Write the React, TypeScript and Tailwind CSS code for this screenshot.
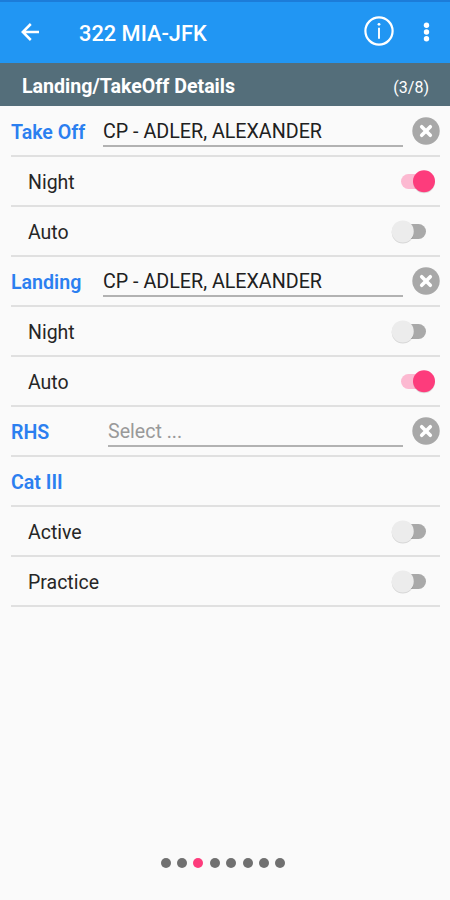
import type { ReactNode } from 'react';

const PAGE_COUNT = 8;
const CURRENT_PAGE = 3;

const ClearIcon = () => (
  <svg className="w-7 h-7 shrink-0" viewBox="0 0 28 28">
    <circle cx="14" cy="14" r="13.7" fill="#a8a8a8" />
    <path d="M9.7 9.7l8.6 8.6M18.3 9.7l-8.6 8.6" stroke="#fff" strokeWidth="3.6" strokeLinecap="round" />
  </svg>
);

const Toggle = ({ on = false }: { on?: boolean }) => (
  <svg className="w-12 h-7 shrink-0" viewBox="0 0 48 28">
    {on ? (
      <>
        <rect x="11" y="7" width="28" height="15" rx="7.5" fill="#fcb9d1" />
        <circle cx="34" cy="15.2" r="11" fill="#000" opacity="0.12" />
        <circle cx="34" cy="14.3" r="11" fill="#fd3c7c" />
      </>
    ) : (
      <>
        <rect x="8" y="7" width="28" height="15" rx="7.5" fill="#a9a9a9" />
        <circle cx="12.8" cy="15.3" r="11.1" fill="#000" opacity="0.14" />
        <circle cx="12.8" cy="14.4" r="11" fill="#ececec" />
      </>
    )}
  </svg>
);

const Row = ({ children }: { children: ReactNode }) => (
  <div className="flex items-center h-[50px] border-b-2 border-[#e0e0e0]">{children}</div>
);

const SectionLabel = ({ children }: { children: ReactNode }) => (
  <span className="block pt-[4px] text-[19.6px] leading-6 font-semibold text-[#2b7ff0]">{children}</span>
);

const PickerRow = ({ label, value }: { label: string; value?: string }) => (
  <Row>
    <div className={value ? 'w-[92px] shrink-0' : 'w-[97px] shrink-0'}>
      <SectionLabel>{label}</SectionLabel>
    </div>
    <div className="flex-1 h-[30px] mt-[2px] border-b-2 border-[#b2b2b2]">
      <div
        className={
          value
            ? 'text-[19.7px] leading-[29px] text-[#202020] whitespace-nowrap'
            : 'text-[19.6px] leading-[29px] text-[#999]'
        }
      >
        {value || 'Select ...'}
      </div>
    </div>
    <div className="ml-[9px]">
      <ClearIcon />
    </div>
  </Row>
);

const ToggleRow = ({ label, on }: { label: string; on?: boolean }) => (
  <Row>
    <span className="flex-1 pl-[17px] pt-[3px] text-[19.5px] leading-6 text-[#262626]">{label}</span>
    <Toggle on={on} />
    <div className="w-[2px]" />
  </Row>
);

const App = () => {
  return (
    <div className="flex flex-col w-[450px] h-[900px] overflow-hidden bg-[#fafafa] font-['Roboto',sans-serif]">
      <div className="h-[2px] bg-[#1c7cd9]" />
      <header className="flex items-center h-[61px] bg-[#2196f3] text-white">
        <svg className="ml-5 -mt-px w-5 h-5" viewBox="0 0 20 20" fill="none" stroke="#fff" strokeWidth="2.5">
          <path d="M19 10H3M10.8 2L2.8 10l8 8" />
        </svg>
        <h1 className="flex-1 ml-[39px] pt-[2px] text-[21.8px] leading-7 font-medium whitespace-nowrap">
          322 MIA-JFK
        </h1>
        <svg className="w-[30px] h-[30px] -mt-[3px]" viewBox="0 0 30 30" fill="none" stroke="#fff">
          <circle cx="15" cy="15" r="13.6" strokeWidth="2.2" />
          <path d="M15 11.7v11" strokeWidth="1.9" />
          <circle cx="15" cy="8.3" r="1.4" fill="#fff" stroke="none" />
        </svg>
        <svg className="ml-[29px] mr-[20px] -mt-px w-[7px] h-5" viewBox="0 0 7 20" fill="#fff">
          <circle cx="3.5" cy="3.2" r="2.7" />
          <circle cx="3.5" cy="10" r="2.7" />
          <circle cx="3.5" cy="16.8" r="2.7" />
        </svg>
      </header>
      <div className="flex items-center justify-between h-[43px] pl-[22px] pr-[21px] bg-[#546e7a] text-white">
        <h2 className="pt-[4px] text-[19.6px] leading-6 font-bold">Landing/TakeOff Details</h2>
        <span className="pt-[6px] text-[16px] leading-5">(3/8)</span>
      </div>

      <main className="flex-1 pt-[1px] pl-[11px] pr-[10px]">
        <PickerRow label="Take Off" value="CP - ADLER, ALEXANDER" />
        <ToggleRow label="Night" on />
        <ToggleRow label="Auto" />
        <PickerRow label="Landing" value="CP - ADLER, ALEXANDER" />
        <ToggleRow label="Night" />
        <ToggleRow label="Auto" on />
        <PickerRow label="RHS" />
        <Row>
          <SectionLabel>Cat III</SectionLabel>
        </Row>
        <ToggleRow label="Active" />
        <ToggleRow label="Practice" />
      </main>

      <div className="flex justify-center gap-[6.4px] pr-[4px] pb-8">
        {Array.from({ length: PAGE_COUNT }, (_, i) => (
          <span
            key={i}
            className={
              i + 1 === CURRENT_PAGE
                ? 'w-[10px] h-[10px] rounded-full bg-[#fd3c7c]'
                : 'w-[10px] h-[10px] rounded-full bg-[#707070]'
            }
          />
        ))}
      </div>
    </div>
  );
};

export default App;
